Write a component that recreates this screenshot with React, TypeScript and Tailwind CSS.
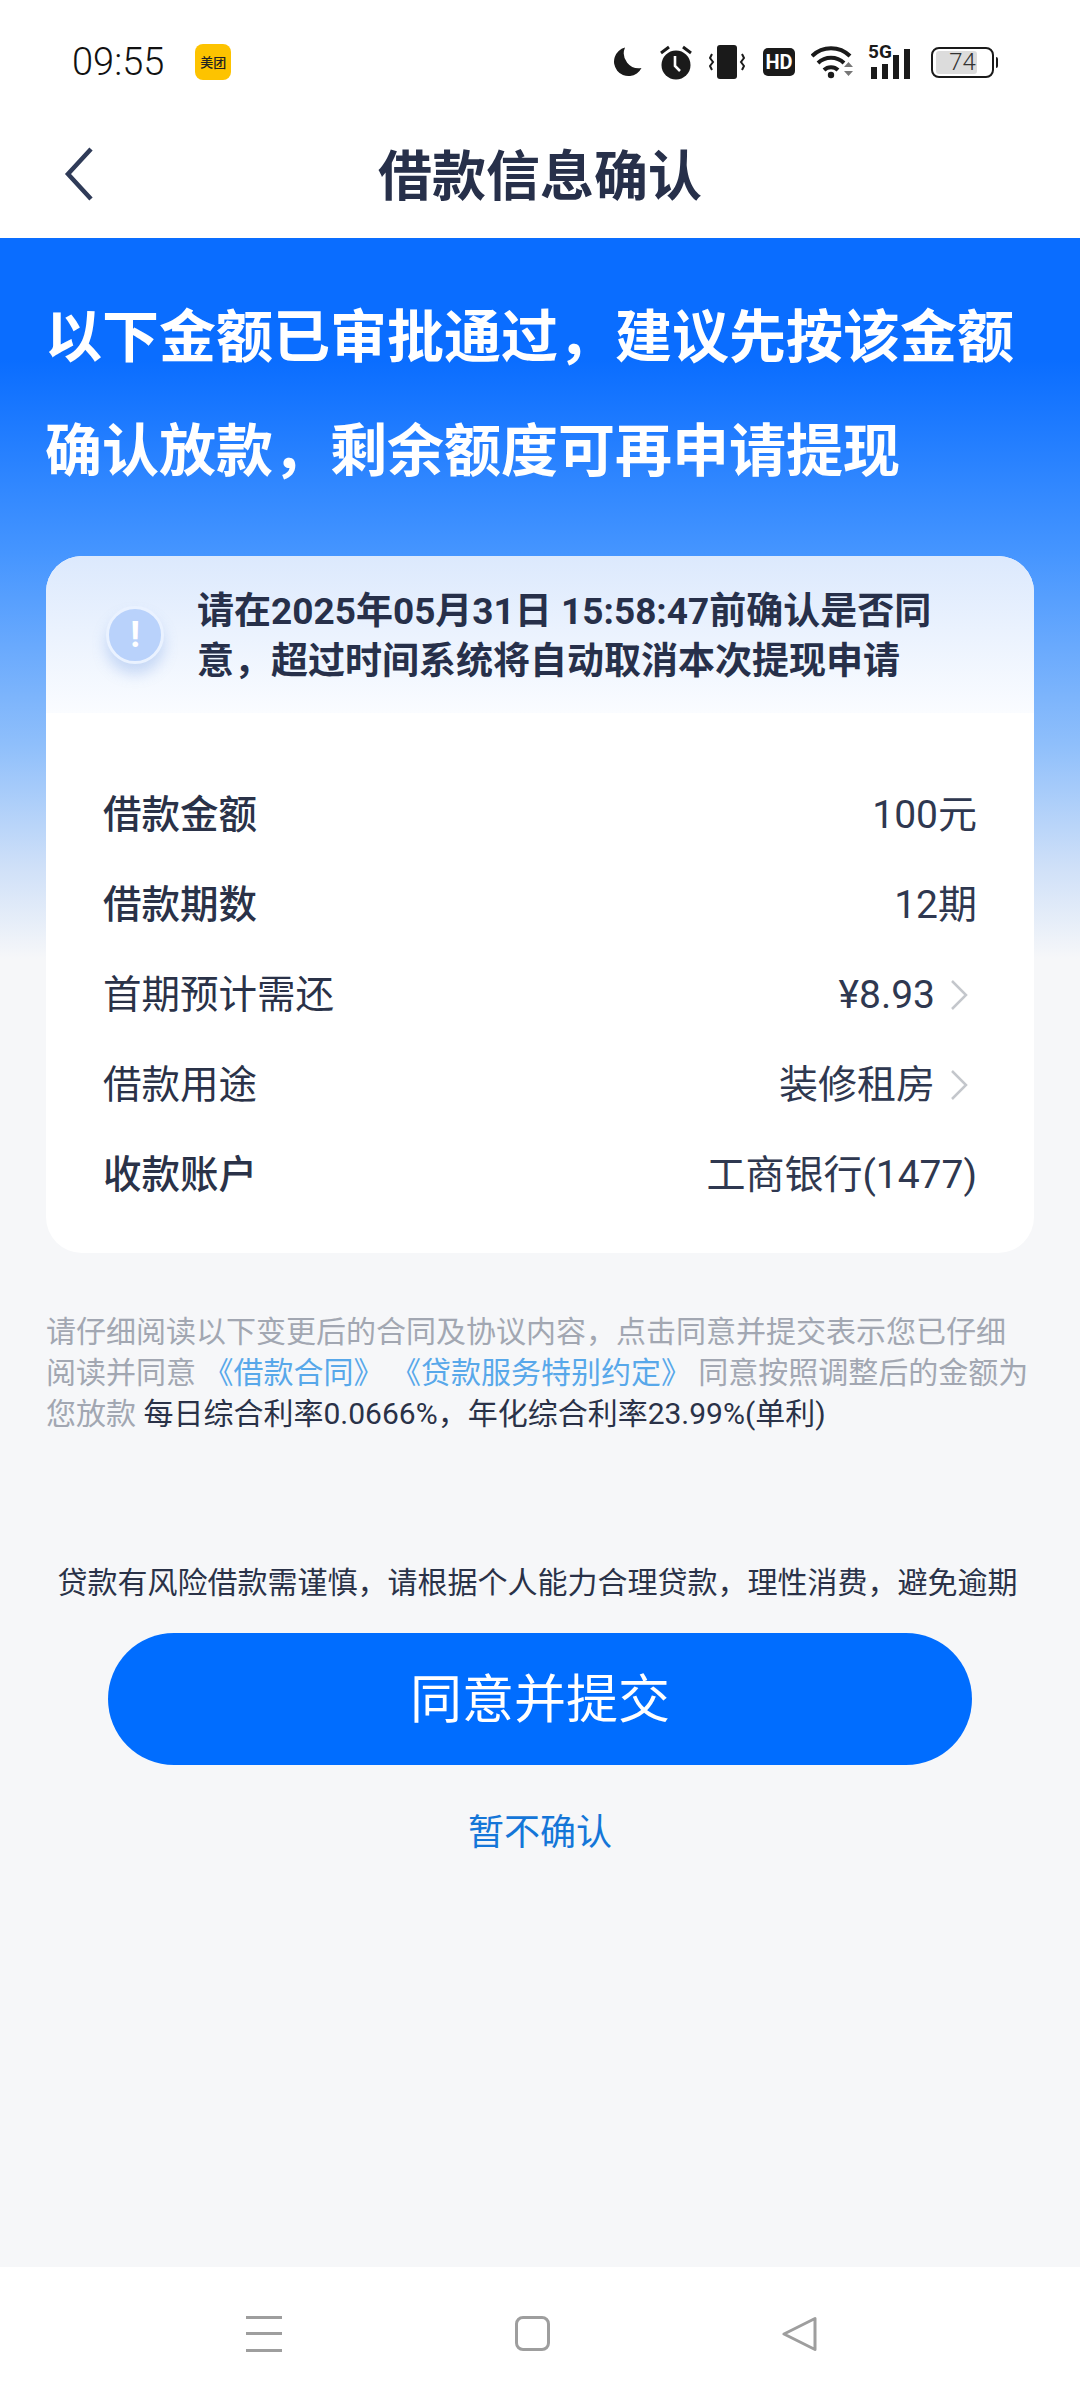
const FONT = "font-['Roboto','Noto_Sans_CJK_SC',sans-serif]";

const ROWS = [
  { label: "借款金额", value: "100元", strong: true },
  { label: "借款期数", value: "12期", strong: true },
  { label: "首期预计需还", value: "¥8.93", arrow: true },
  { label: "借款用途", value: "装修租房", arrow: true },
  { label: "收款账户", value: "工商银行(1477)", strong: true },
];

function StatusIcons() {
  return (
    <div className="flex items-center">
      <svg width="30" height="30" viewBox="0 0 30 30" className="mr-[17px]">
        <path d="M13 0.5A14.5 14.5 0 1 0 29.500 21 A15 15 0 0 1 13 0.5Z" fill="#1a1a1a" />
      </svg>
      <svg width="34" height="36" viewBox="0 0 34 36" className="mr-[16px]">
        <circle cx="17" cy="21" r="14.500" fill="#1a1a1a" />
        <path d="M16 12v10l5 5" stroke="#fff" strokeWidth="2.600" fill="none" />
        <path d="M2 9l8-6M32 9l-8-6" stroke="#1a1a1a" strokeWidth="3" />
      </svg>
      <svg width="36" height="34" viewBox="0 0 36 34" className="mr-[18px]">
        <rect x="8" y="0" width="20" height="34" rx="3" fill="#1a1a1a" />
        <path d="M3 9l-2 4 3 4-3 4 2 4M33 9l2 4-3 4 3 4-2 4" stroke="#1a1a1a" strokeWidth="2" fill="none" />
      </svg>
      <div className="mr-[16px] flex h-[28px] w-[32px] items-center justify-center rounded-[5px] bg-[#1a1a1a] text-[20px] leading-none font-bold text-white">
        HD
      </div>
      <svg width="44" height="34" viewBox="0 0 44 34" className="mr-[13px]">
        <path d="M1 11a27 27 0 0 1 38 0M7 18a19 19 0 0 1 26 0M13 25a10 10 0 0 1 14 0" stroke="#1a1a1a" strokeWidth="4" fill="none" />
        <circle cx="20" cy="30" r="3.200" fill="#1a1a1a" />
        <path d="M33 22l4.500-5 4.500 5zM33 26l4.500 5 4.500-5z" fill="#777" />
      </svg>
      <div className="relative mr-[16px] h-[34px] w-[47px]">
        <span className="absolute top-[-4px] left-0 text-[19px] leading-[22px] font-bold text-[#1a1a1a]">5G</span>
        <div className="absolute inset-x-0 bottom-0 flex items-end gap-[5px] pl-[3px]">
          <span className="h-[12px] w-[6px] bg-[#1a1a1a]" />
          <span className="h-[15px] w-[6px] bg-[#1a1a1a]" />
          <span className="h-[24px] w-[6px] bg-[#1a1a1a]" />
          <span className="h-[30px] w-[6px] bg-[#1a1a1a]" />
        </div>
      </div>
      <div className="relative flex h-[31px] w-[63px] items-center rounded-[8px] border-2 border-[#1a1a1a] px-[3px]">
        <div className="h-[23px] w-[41px] rounded-[3px] bg-[#dcdcdc]" />
        <span className="absolute inset-x-0 text-center text-[24px] leading-none font-light text-[#333]">74</span>
      </div>
      <span className="ml-[2px] h-[11px] w-[2px] rounded-r bg-[#1a1a1a]" />
    </div>
  );
}

export default function App() {
  return (
    <div className={`${FONT} flex h-[2400px] w-[1080px] flex-col bg-[#f6f7f9] text-[#2a3248]`}>
      <div className="flex h-[124px] items-center justify-between bg-white pr-[82px] pl-[72px]">
        <div className="flex items-center">
          <span className="text-[38px] leading-none font-light text-[#111]">09:55</span>
          <div className="ml-[31px] flex h-[36px] w-[36px] items-center justify-center rounded-[8px] bg-[#fdc300] text-[13px] leading-none font-medium whitespace-nowrap text-[#222]">
            美团
          </div>
        </div>
        <StatusIcons />
      </div>

      <div className="relative flex h-[114px] items-center justify-center bg-white pb-[6px]">
        <svg width="34" height="54" viewBox="0 0 34 54" className="absolute top-[23px] left-[63px]" fill="none">
          <path d="M28 2L5 27l23 25" stroke="#2f3b58" strokeWidth="4.500" />
        </svg>
        <h1 className="text-[54px] leading-none font-bold text-[#27304a]">借款信息确认</h1>
      </div>

      <div className="bg-[linear-gradient(180deg,#0a6dff_0%,#0a6dff_12%,#4595ff_31%,#8fbffb_50%,#cfe0f8_62%,#f6f7f9_71%)] px-[46px]">
        <div className="pt-[43px] text-[57px] leading-[114px] font-bold text-white">
          <p className="ml-[-1px] whitespace-nowrap">以下金额已审批通过，建议先按该金额</p>
          <p className="ml-[-1px] whitespace-nowrap">确认放款，剩余额度可再申请提现</p>
        </div>

        <div className="mt-[47px] overflow-hidden rounded-[36px] bg-white">
          <div className="flex h-[157px] items-center bg-[linear-gradient(180deg,#dce9fd_0%,#fafcff_100%)] pl-[60px]">
            <div className="flex h-[58px] w-[58px] items-center justify-center rounded-full border-[3px] border-[#eaf2ff] bg-[#b9d2fb] shadow-[0_10px_14px_rgba(120,160,230,0.35)]">
              <span className="text-[36px] leading-none font-bold text-white">!</span>
            </div>
            <p className="mt-[4px] ml-[33px] w-[740px] text-[37px] leading-[50px] font-bold text-[#27304a]">
              请在2025年05月31日 15:58:47前确认是否同意，超过时间系统将自动取消本次提现申请
            </p>
          </div>
          <div className="flex flex-col px-[57px] pt-[57px] pb-[33px]">
            {ROWS.map((r) => (
              <div key={r.label} className="flex h-[90px] items-center justify-between leading-none">
                <span className={r.strong ? "text-[38.5px] font-medium" : "text-[38.5px]"}>{r.label}</span>
                <span className="flex items-center text-[39px] text-[#2f3850]">
                  {r.value}
                  {r.arrow && (
                    <svg width="18" height="32" viewBox="0 0 18 32" className="mr-[9px] ml-[15px]" fill="none">
                      <path d="M2 2l14 14L2 30" stroke="#c4c7cc" strokeWidth="2.500" />
                    </svg>
                  )}
                </span>
              </div>
            ))}
          </div>
        </div>
      </div>

      <div className="px-[46px] pt-[58px] text-[30px] leading-[41px] text-[#a2a7b2]">
        <span>请仔细阅读以下变更后的合同及协议内容，点击同意并提交表示您已仔细阅读并同意</span>
        <span className="text-[#58a8ea]"> 《借款合同》 《贷款服务特别约定》</span>
        <span> 同意按照调整后的金额为您放款</span>
        <span className="text-[#2a3248]"> 每日综合利率0.0666%，年化综合利率23.99%(单利)</span>
      </div>

      <p className="mt-[128px] pr-[5px] text-center text-[30px] leading-[42px] text-[#2a3248]">
        贷款有风险借款需谨慎，请根据个人能力合理贷款，理性消费，避免逾期
      </p>

      <button className="mx-auto mt-[29px] flex h-[132px] w-[864px] items-center justify-center rounded-full bg-[#006dff] pt-[3px] text-[52px] text-white">
        同意并提交
      </button>
      <button className="mt-[44px] text-center text-[36px] leading-[48px] text-[#1476d8]">暂不确认</button>

      <div className="mt-auto flex h-[133px] items-center bg-white">
        <div className="ml-[246px] flex h-[36px] w-[36px] flex-col justify-between">
          <span className="h-[3px] bg-[#9e9e9e]" />
          <span className="h-[3px] bg-[#9e9e9e]" />
          <span className="h-[3px] bg-[#9e9e9e]" />
        </div>
        <div className="ml-[233px] h-[35px] w-[35px] rounded-[8px] border-[3px] border-[#9e9e9e]" />
        <svg width="36" height="36" viewBox="0 0 36 36" className="ml-[232px]" fill="none">
          <path d="M33 2.500v31L2 18z" stroke="#9e9e9e" strokeWidth="3" strokeLinejoin="round" />
        </svg>
      </div>
    </div>
  );
}
